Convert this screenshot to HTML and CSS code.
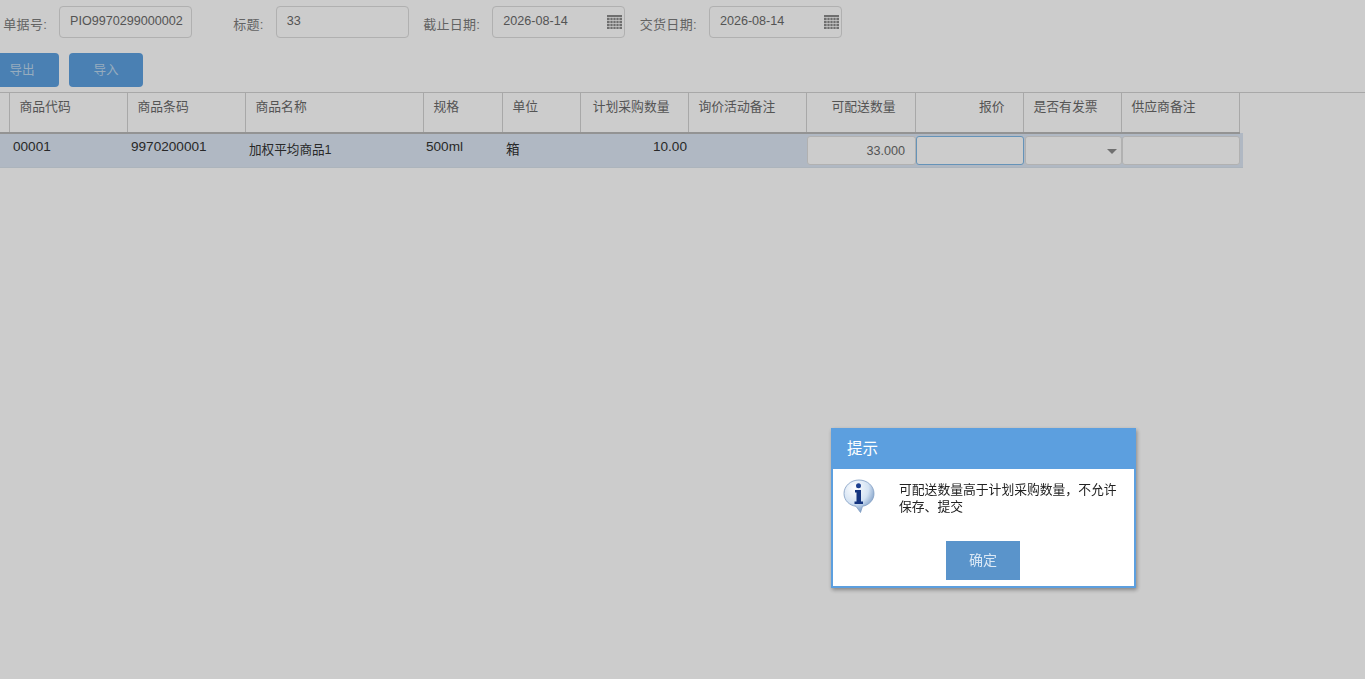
FILE: index.html
```html
<!DOCTYPE html>
<html lang="zh-CN">
<head>
  <meta charset="UTF-8">
  <meta name="viewport" content="width=device-width, initial-scale=1.0">
  <title>询价报价</title>
  <link rel="stylesheet" href="styles.css">
</head>
<body>
  <div class="page">
    <div class="filters">
      <div class="field"><label>单据号:</label><div class="box">PIO9970299000002</div></div>
      <div class="field"><label>标题:</label><div class="box">33</div></div>
      <div class="field"><label>截止日期:</label><div class="box box--date">2026-08-14
        <svg class="cal" viewBox="0 0 15 14"><path d="M0 0h15v14H0z" fill="#8a8a8a"/><path d="M0 2.5h15M0 5.5h15M0 8.5h15M0 11.500h15M3 2v12M6 2v12M9 2v12M12 2v12" stroke="#fff" stroke-opacity=".75" stroke-width="1"/></svg></div></div>
      <div class="field"><label>交货日期:</label><div class="box box--date">2026-08-14
        <svg class="cal" viewBox="0 0 15 14"><path d="M0 0h15v14H0z" fill="#8a8a8a"/><path d="M0 2.5h15M0 5.5h15M0 8.5h15M0 11.500h15M3 2v12M6 2v12M9 2v12M12 2v12" stroke="#fff" stroke-opacity=".75" stroke-width="1"/></svg></div></div>
    </div>

    <div class="actions">
      <button class="btn">导出</button>
      <button class="btn">导入</button>
    </div>

    <div class="grid-wrap">
      <table class="grid">
        <colgroup>
          <col class="c0"><col class="c1"><col class="c1"><col class="c2"><col class="c3"><col class="c4"><col class="c5"><col class="c1"><col class="c6"><col class="c5"><col class="c7"><col class="c8"><col class="c9">
        </colgroup>
        <thead>
          <tr>
            <th></th>
            <th>商品代码</th>
            <th>商品条码</th>
            <th>商品名称</th>
            <th>规格</th>
            <th>单位</th>
            <th class="right r18">计划采购数量</th>
            <th>询价活动备注</th>
            <th class="right r19">可配送数量</th>
            <th class="right r18">报价</th>
            <th>是否有发票</th>
            <th>供应商备注</th>
            <th class="blank"></th>
          </tr>
        </thead>
        <tbody>
          <tr>
            <td></td>
            <td class="num">00001</td>
            <td class="num">9970200001</td>
            <td class="name">加权平均商品1</td>
            <td class="num num--tight">500ml</td>
            <td class="unit">箱</td>
            <td class="num qty">10.00</td>
            <td></td>
            <td class="edit"><div class="cell-input cell-input--num">33.000</div></td>
            <td class="edit"><div class="cell-input cell-input--focus"></div></td>
            <td class="edit edit--inset"><div class="cell-input cell-input--select"><span class="caret"></span></div></td>
            <td class="edit"><div class="cell-input"></div></td>
            <td></td>
          </tr>
        </tbody>
      </table>
    </div>
  </div>

  <div class="mask"></div>

  <div class="dialog">
    <div class="dialog__title">提示</div>
    <div class="dialog__body">
      <svg class="info" viewBox="0 0 32 34">
        <defs>
          <radialGradient id="bubble" cx="35%" cy="25%" r="85%">
            <stop offset="0" stop-color="#ffffff"/>
            <stop offset=".55" stop-color="#d3e2f3"/>
            <stop offset="1" stop-color="#5f85b6"/>
          </radialGradient>
        </defs>
        <path d="M16 1C7.700 1 1 7 1 14.500 1 21.500 6.500 26.500 13 27.300L17.500 33.500 19.500 27.300C26.500 26 31 20.800 31 14.500 31 7 24.300 1 16 1Z" fill="url(#bubble)" stroke="#7f9cc2" stroke-width=".8"/>
        <circle cx="15.500" cy="6.800" r="2.500" fill="#1c3f8f"/>
        <path d="M12 11h6v11.500h2V25h-8.500v-2.500h2V13.500h-1.500Z" fill="#14347f"/>
      </svg>
      <p class="dialog__msg">可配送数量高于计划采购数量，不允许保存、提交</p>
    </div>
    <div class="dialog__foot"><button class="dialog__ok">确定</button></div>
  </div>
</body>
</html>
```

FILE: styles.css
```css
html, body {
  margin: 0;
  height: 100%;
  overflow: hidden;
  background: #fff;
}

body {
  font-family: "Liberation Sans", "Noto Sans CJK SC", sans-serif;
  font-size: 12.6px;
  color: #6a6a6a;
}

.filters {
  display: grid;
  grid-template-columns: repeat(4, 216.6px);
  margin-left: -24.5px;
  padding-top: 6px;
}

.field {
  display: flex;
  justify-content: flex-end;
  align-items: center;
}

.field label {
  padding: 3px 12px 0 0;
  color: #7c7c7c;
  font-size: 13px;
  letter-spacing: 0.3px;
}

.box {
  position: relative;
  box-sizing: border-box;
  width: 133px;
  height: 32px;
  padding: 6px 0 0 10px;
  border: 1px solid #dcdcdc;
  border-radius: 4px;
  background: #fff;
  color: #6a6a6a;
  line-height: 16px;
  white-space: nowrap;
  overflow: hidden;
}

.cal {
  position: absolute;
  top: 8px;
  right: 2px;
  width: 15px;
  height: 14px;
}

.actions {
  display: flex;
  gap: 10px;
  margin: 15px 0 0 -15px;
}

.btn {
  width: 74px;
  height: 34px;
  padding: 0 0 3px;
  border: 0;
  border-radius: 4px;
  background: #5da1e0;
  color: #bcd7ee;
  font: inherit;
}

.grid-wrap {
  margin-top: 5px;
  border-top: 1px solid #d2d2d2;
}

.grid {
  table-layout: fixed;
  width: 1243px;
  border-collapse: collapse;
}

.c0 { width: 9px; }
.c1 { width: 118px; }
.c2 { width: 178px; }
.c3 { width: 79px; }
.c4 { width: 78px; }
.c5 { width: 108px; }
.c6 { width: 109px; }
.c7 { width: 98px; }
.c8 { width: 118px; }
.c9 { width: 4px; }

.grid th {
  box-sizing: border-box;
  height: 40px;
  padding: 3px 0 0 10px;
  border-right: 1px solid #d2d2d2;
  border-bottom: 2px solid #b8b8b8;
  color: #6a6a6a;
  font-size: 12.8px;
  font-weight: normal;
  text-align: left;
  vertical-align: top;
}

.grid th.right { text-align: right; padding-left: 0; }
.grid th.r18 { padding-right: 18px; }
.grid th.r19 { padding-right: 19px; }
.grid th.blank { border: 0; }

.grid tbody tr {
  background: #dce7f4;
  height: 34px;
}

.grid td {
  padding: 0 0 0 4px;
  border-bottom: 1px solid #d7e1ec;
  color: #333;
  vertical-align: top;
}

.grid td.num {
  padding-top: 4px;
  font-size: 13.6px;
  line-height: 18px;
}

.grid td.num--tight { padding-left: 3px; }

.grid td.name {
  padding-top: 7px;
  line-height: 18px;
}

.grid td.unit {
  padding-top: 7px;
  font-size: 13.6px;
  line-height: 18px;
}

.grid td.qty { padding-right: 1px; text-align: right; }

.grid td.edit { padding: 2px 0 0 1px; }
.grid td.edit--inset { padding-left: 2px; }

.cell-input {
  position: relative;
  box-sizing: border-box;
  height: 29px;
  margin-right: -1px;
  border: 1px solid #dedede;
  border-radius: 3px;
  background: #fff;
  line-height: 29px;
}

.cell-input--num {
  padding-right: 10px;
  color: #6a6a6a;
  text-align: right;
}

.cell-input--focus { border-color: #7fb8e6; }

.caret {
  position: absolute;
  top: 12px;
  right: 4px;
  border-top: 5px solid #8d8d8d;
  border-left: 5px solid transparent;
  border-right: 5px solid transparent;
}

.mask {
  position: fixed;
  inset: 0;
  background: rgba(0, 0, 0, 0.2);
}

.dialog {
  position: fixed;
  left: 831px;
  top: 428px;
  box-sizing: border-box;
  width: 305px;
  height: 160px;
  border: 2px solid #5c9fdf;
  border-top: 0;
  background: #fff;
  box-shadow: 1px 2px 4px rgba(0, 0, 0, 0.35);
}

.dialog__title {
  height: 41px;
  margin: 0 -2px;
  padding-left: 16px;
  background: #5c9fdf;
  color: #fff;
  font-size: 15.5px;
  line-height: 41px;
}

.dialog__body {
  display: flex;
  padding: 10px 12px 0 10px;
}

.info {
  flex: none;
  width: 32px;
  height: 34px;
}

.dialog__msg {
  width: 220px;
  margin: 2px 0 0 24px;
  color: #222;
  font-size: 12.8px;
  line-height: 17px;
}

.dialog__foot {
  display: flex;
  justify-content: center;
  margin-top: 26px;
  padding-right: 1px;
}

.dialog__ok {
  width: 74px;
  height: 39px;
  padding: 0 0 3px;
  border: 0;
  background: #5a94cb;
  color: #dbe8f5;
  font: inherit;
  font-size: 14px;
}
```
